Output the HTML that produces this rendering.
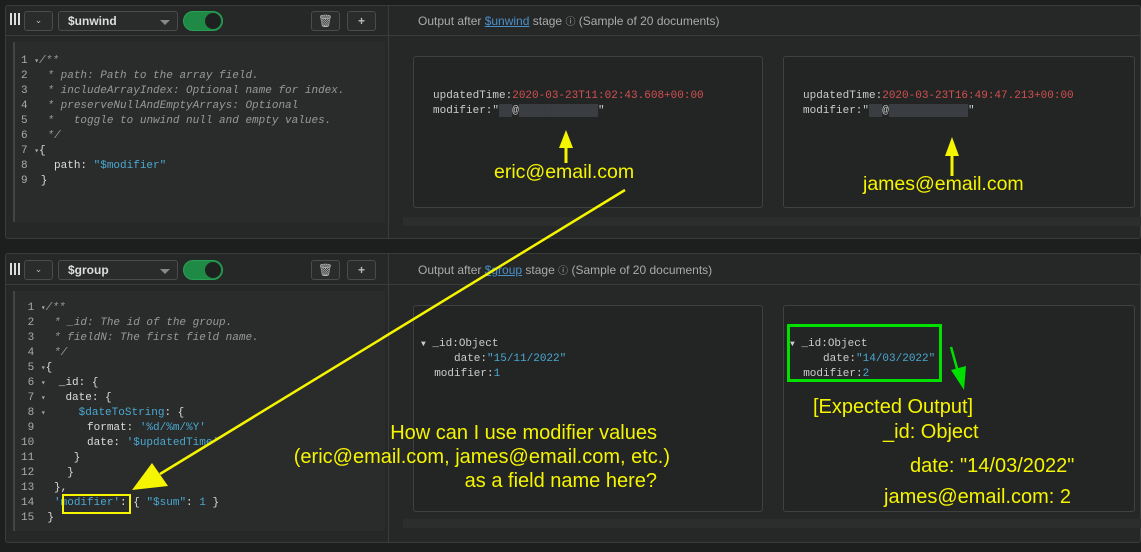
<!DOCTYPE html>
<html><head><meta charset="utf-8"><style>
*{margin:0;padding:0;box-sizing:border-box}
body{width:1141px;height:552px;background:#1d1e1e;position:relative;overflow:hidden;font-family:"Liberation Sans",sans-serif}
.a{position:absolute}
.stage{position:absolute;left:5px;background:#262727;border:1px solid #3a3c3c;border-radius:3px}
.btn{position:absolute;border:1px solid #4a4c4c;border-radius:3px;background:#2a2c2c;color:#bbb;font-size:12px;text-align:center}
.code{position:absolute;font-family:"Liberation Mono",monospace;font-size:11px;line-height:15px;color:#ddd;white-space:pre}
.c{color:#999;font-style:italic}
.s{color:#4aa8d0}
.n{color:#aaa}
.card{position:absolute;border:1px solid #3f4141;border-radius:3px;background:#232424}
.doc{position:absolute;font-family:"Liberation Mono",monospace;font-size:11px;line-height:15px;color:#ccc;white-space:pre}
.r{color:#d45050}
.y{position:absolute;color:#f5f500;font-size:20px;white-space:nowrap}
.yr{position:absolute;color:#f5f500;font-size:20px;white-space:nowrap;text-align:right;width:400px}
.hdr{position:absolute;font-size:12px;color:#aaa}
.hdr u{color:#4a90c8}
</style></head><body>

<div class="stage" style="top:5px;width:1136px;height:234px"></div>
<div class="a" style="left:388px;top:5px;width:1px;height:234px;background:#3a3c3c"></div>
<div class="a" style="left:5px;top:35px;width:1136px;height:1px;background:#3a3c3c"></div>
<div class="a" style="left:10px;top:13px;width:10px;height:12px;border-left:2px solid #ddd;border-right:2px solid #ddd"><div class="a" style="left:2px;top:0;width:2px;height:12px;background:#ddd"></div></div>
<div class="btn" style="left:24px;top:11px;width:29px;height:20px;line-height:17px;font-size:9px">⌄</div>
<div class="btn" style="left:58px;top:11px;width:120px;height:20px;line-height:18px;text-align:left;padding-left:9px;font-weight:bold;color:#ddd">$unwind<span class="a" style="right:7px;top:8px;border:5px solid transparent;border-top:5px solid #888"></span></div>
<div class="a" style="left:183px;top:11px;width:40px;height:20px;border-radius:10px;background:#1e8a45;border:1px solid #2aa055"><div class="a" style="right:1px;top:1px;width:16px;height:16px;border-radius:8px;background:#1f2121"></div></div>
<div class="btn" style="left:311px;top:11px;width:29px;height:20px;line-height:18px">🗑</div>
<div class="btn" style="left:347px;top:11px;width:29px;height:20px;line-height:18px;font-weight:bold">+</div>
<div class="a" style="left:13px;top:42px;width:372px;height:180px;background:#2a2b2b;border-left:2px solid #444"></div>
<div class="code" style="left:21px;top:54px"><span class="n">1</span> <span class="n" style="font-size:8px">▾</span><span class="c">/**</span>
<span class="n">2</span>   <span class="c">* path: Path to the array field.</span>
<span class="n">3</span>   <span class="c">* includeArrayIndex: Optional name for index.</span>
<span class="n">4</span>   <span class="c">* preserveNullAndEmptyArrays: Optional</span>
<span class="n">5</span>   <span class="c">*   toggle to unwind null and empty values.</span>
<span class="n">6</span>   <span class="c">*/</span>
<span class="n">7</span> <span class="n" style="font-size:8px">▾</span>{
<span class="n">8</span>    path: <span class="s">"$modifier"</span>
<span class="n">9</span>  }</div>
<div class="hdr" style="left:418px;top:13px">Output after <u>$unwind</u> stage <span style="font-size:10px">ⓘ</span> (Sample of 20 documents)</div>
<div class="card" style="left:413px;top:56px;width:350px;height:152px"></div>
<div class="card" style="left:783px;top:56px;width:352px;height:152px"></div>
<div class="doc" style="left:433px;top:89px">updatedTime:<span class="r">2020-03-23T11:02:43.608+00:00</span>
modifier:"<span style="background:#3a3d42;color:#3a3d42">██</span>@<span style="background:#3a3d42;color:#3a3d42">████████████</span>"</div>
<div class="doc" style="left:803px;top:89px">updatedTime:<span class="r">2020-03-23T16:49:47.213+00:00</span>
modifier:"<span style="background:#3a3d42;color:#3a3d42">██</span>@<span style="background:#3a3d42;color:#3a3d42">████████████</span>"</div>
<div class="a" style="left:403px;top:217px;width:738px;height:9px;background:#2c2e2e"></div>

<div class="stage" style="top:253px;width:1136px;height:290px"></div>
<div class="a" style="left:388px;top:253px;width:1px;height:290px;background:#3a3c3c"></div>
<div class="a" style="left:5px;top:284px;width:1136px;height:1px;background:#3a3c3c"></div>
<div class="a" style="left:10px;top:263px;width:10px;height:12px;border-left:2px solid #ddd;border-right:2px solid #ddd"><div class="a" style="left:2px;top:0;width:2px;height:12px;background:#ddd"></div></div>
<div class="btn" style="left:24px;top:260px;width:29px;height:20px;line-height:17px;font-size:9px">⌄</div>
<div class="btn" style="left:58px;top:260px;width:120px;height:20px;line-height:18px;text-align:left;padding-left:9px;font-weight:bold;color:#ddd">$group<span class="a" style="right:7px;top:8px;border:5px solid transparent;border-top:5px solid #888"></span></div>
<div class="a" style="left:183px;top:260px;width:40px;height:20px;border-radius:10px;background:#1e8a45;border:1px solid #2aa055"><div class="a" style="right:1px;top:1px;width:16px;height:16px;border-radius:8px;background:#1f2121"></div></div>
<div class="btn" style="left:311px;top:260px;width:29px;height:20px;line-height:18px">🗑</div>
<div class="btn" style="left:347px;top:260px;width:29px;height:20px;line-height:18px;font-weight:bold">+</div>
<div class="a" style="left:13px;top:291px;width:372px;height:240px;background:#2a2b2b;border-left:2px solid #444"></div>
<div class="code" style="left:21px;top:301px"><span class="n"> 1</span> <span class="n" style="font-size:8px">▾</span><span class="c">/**</span>
<span class="n"> 2</span>   <span class="c">* _id: The id of the group.</span>
<span class="n"> 3</span>   <span class="c">* fieldN: The first field name.</span>
<span class="n"> 4</span>   <span class="c">*/</span>
<span class="n"> 5</span> <span class="n" style="font-size:8px">▾</span>{
<span class="n"> 6</span> <span class="n" style="font-size:8px">▾</span>  _id: {
<span class="n"> 7</span> <span class="n" style="font-size:8px">▾</span>   date: {
<span class="n"> 8</span> <span class="n" style="font-size:8px">▾</span>     <span class="s">$dateToString</span>: {
<span class="n"> 9</span>        format: <span class="s">'%d/%m/%Y'</span>
<span class="n">10</span>        date: <span class="s">'$updatedTime'</span>
<span class="n">11</span>      }
<span class="n">12</span>     }
<span class="n">13</span>   },
<span class="n">14</span>   <span class="s">'modifier'</span>: { <span class="s">"$sum"</span>: <span class="s">1</span> }
<span class="n">15</span>  }</div>
<div class="hdr" style="left:418px;top:262px">Output after <u>$group</u> stage <span style="font-size:10px">ⓘ</span> (Sample of 20 documents)</div>
<div class="card" style="left:413px;top:305px;width:350px;height:207px"></div>
<div class="card" style="left:783px;top:305px;width:352px;height:207px"></div>
<div class="doc" style="left:421px;top:337px"><span style="font-size:8px">▼</span> _id:Object
     date:<span class="s">"15/11/2022"</span>
  modifier:<span class="s">1</span></div>
<div class="doc" style="left:790px;top:337px"><span style="font-size:8px">▼</span> _id:Object
     date:<span class="s">"14/03/2022"</span>
  modifier:<span class="s">2</span></div>
<div class="a" style="left:403px;top:519px;width:738px;height:9px;background:#2c2e2e"></div>

<div class="a" style="left:62px;top:494px;width:69px;height:20px;border:2px solid #f5f500"></div>
<div class="a" style="left:787px;top:324px;width:155px;height:58px;border:3px solid #00e000"></div>
<svg class="a" style="left:0;top:0" width="1141" height="552">
<line x1="625" y1="190" x2="160" y2="474" stroke="#f5f500" stroke-width="2.5"/>
<polygon points="132,490 152,463 168,486" fill="#f5f500"/>
<line x1="566" y1="163" x2="566" y2="146" stroke="#f5f500" stroke-width="3"/>
<polygon points="559,148 573,148 566,130" fill="#f5f500"/>
<line x1="952" y1="176" x2="952" y2="154" stroke="#f5f500" stroke-width="3"/>
<polygon points="945,156 959,156 952,137" fill="#f5f500"/>
<line x1="951" y1="347" x2="958" y2="372" stroke="#00e000" stroke-width="2.5"/>
<polygon points="951,370 966,366 964,390" fill="#00e000"/>
</svg>
<div class="y" style="left:494px;top:161px;font-size:19.5px">eric@email.com</div>
<div class="y" style="left:863px;top:173px;font-size:19.5px">james@email.com</div>
<div class="yr" style="left:257px;top:422px">How can I use modifier values</div>
<div class="yr" style="left:270px;top:446px">(eric@email.com, james@email.com, etc.)</div>
<div class="yr" style="left:257px;top:470px">as a field name here?</div>
<div class="y" style="left:813px;top:396px">[Expected Output]</div>
<div class="y" style="left:883px;top:421px">_id: Object</div>
<div class="y" style="left:910px;top:455px">date: "14/03/2022"</div>
<div class="y" style="left:884px;top:486px">james@email.com: 2</div>
</body></html>
